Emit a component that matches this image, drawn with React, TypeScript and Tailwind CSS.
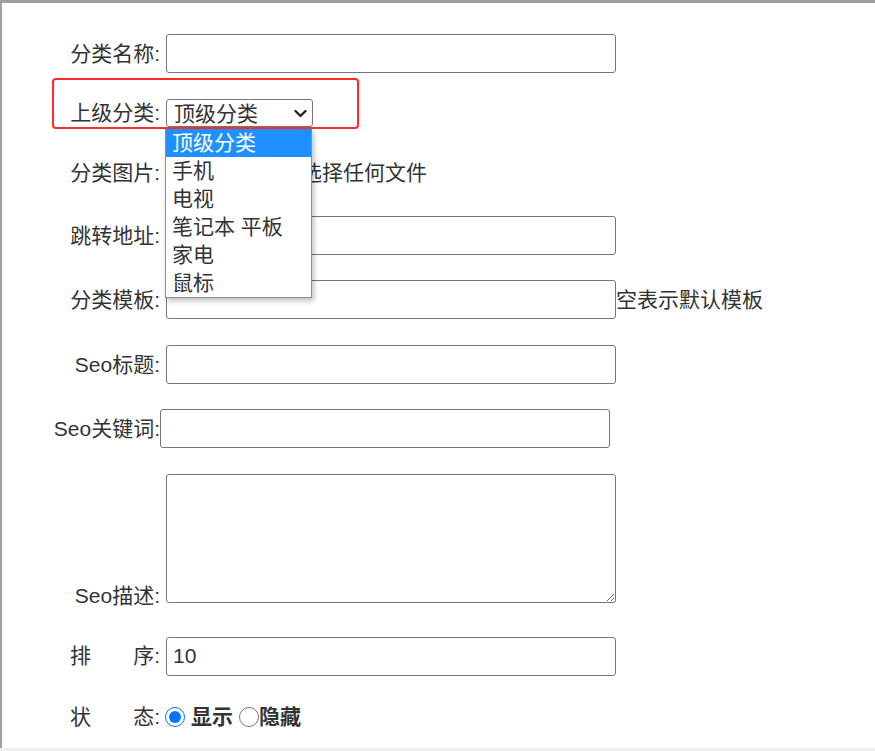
import React from "react";

const inputCls =
  "h-[39px] w-[450px] rounded-[3px] border border-[#767676] bg-white px-[6px] text-[21px] text-[#333] outline-none";

function Label({ children }: { children: React.ReactNode }) {
  return <div className="flex w-[158px] shrink-0 justify-end whitespace-nowrap">{children}</div>;
}

function SpacedLabel({ a, b }: { a: string; b: string }) {
  return (
    <div className="flex w-[158px] shrink-0 justify-end">
      <div className="flex w-[90px] justify-between whitespace-nowrap">
        <span>{a}</span>
        <span>{b}</span>
      </div>
    </div>
  );
}

const options = ["顶级分类", "手机", "电视", "笔记本 平板", "家电", "鼠标"];

export default function App() {
  return (
    <div className="min-h-[751px] bg-[#efefef] font-['Liberation_Sans','Noto_Sans_CJK_SC',sans-serif] text-[21px] leading-[28px] text-[#333]">
      <div className="relative h-[748px] border-l-2 border-t-[3px] border-[#a0a0a0] bg-white">
        <div className="flex flex-col">
          {/* 分类名称 */}
          <div className="mt-[31px] flex h-[39px] items-center">
            <Label>分类名称:</Label>
            <input className={`ml-[6px] ${inputCls}`} />
          </div>

          {/* 上级分类 */}
          <div className="mt-[26px] flex h-[28px] items-center">
            <Label>上级分类:</Label>
            <div className="relative z-10 ml-[6px]">
              <div className="flex h-[28px] w-[147px] items-center justify-between rounded-[3px] border border-[#767676] bg-white pl-[7px] pr-[5px]">
                <span className="pt-[1px] leading-[26px]">顶级分类</span>
                <svg width="13" height="9" viewBox="0 0 13 9" className="mt-[1px] text-[#222]">
                  <path d="M1.5 2 L6.5 7 L11.5 2" fill="none" stroke="currentColor" strokeWidth="2.3" strokeLinecap="round" strokeLinejoin="round" />
                </svg>
              </div>
              <div className="absolute left-[-1px] top-[29px] w-[147px] border border-[#8f8f8f] bg-white shadow-[2px_3px_5px_rgba(0,0,0,0.25)]">
                {options.map((o, i) => (
                  <div
                    key={o}
                    className={
                      i === 0
                        ? "h-[28px] whitespace-nowrap bg-[#1e90ff] pl-[6px] leading-[28px] text-white"
                        : "h-[28px] whitespace-nowrap pl-[6px] leading-[28px] text-[#333]"
                    }
                  >
                    {o}
                  </div>
                ))}
              </div>
            </div>
          </div>

          {/* 分类图片 */}
          <div className="mt-[32px] flex h-[28px] items-center">
            <Label>分类图片:</Label>
            <div className="ml-[6px] flex items-center">
              <button className="h-[26px] w-[102px] rounded-[3px] border border-[#767676] bg-[#efefef] text-[21px] leading-[24px]">
                选择文件
              </button>
              <span className="ml-[12px] whitespace-nowrap">未选择任何文件</span>
            </div>
          </div>

          {/* 跳转地址 */}
          <div className="mt-[29px] flex h-[39px] items-center">
            <Label>跳转地址:</Label>
            <input className={`ml-[6px] ${inputCls}`} />
          </div>

          {/* 分类模板 */}
          <div className="mt-[25px] flex h-[39px] items-center">
            <Label>分类模板:</Label>
            <input className={`ml-[6px] ${inputCls}`} />
            <span className="whitespace-nowrap">空表示默认模板</span>
          </div>

          {/* Seo标题 */}
          <div className="mt-[26px] flex h-[39px] items-center">
            <Label>Seo标题:</Label>
            <input className={`ml-[6px] ${inputCls}`} />
          </div>

          {/* Seo关键词 */}
          <div className="mt-[25px] flex h-[39px] items-center">
            <Label>Seo关键词:</Label>
            <input className={inputCls} />
          </div>

          {/* Seo描述 */}
          <div className="mt-[26px] flex items-end">
            <div className="mb-[-3px] flex w-[158px] shrink-0 justify-end leading-none">Seo描述:</div>
            <textarea className="ml-[6px] block h-[129px] w-[450px] rounded-[3px] border border-[#767676] bg-white px-[6px] text-[21px] outline-none" />
          </div>

          {/* 排序 */}
          <div className="mt-[34px] flex h-[38px] items-center">
            <SpacedLabel a="排" b="序:" />
            <input className={`ml-[6px] ${inputCls} h-[38px]`} defaultValue="10" />
          </div>

          {/* 状态 */}
          <div className="mt-[28px] flex h-[28px] items-center">
            <SpacedLabel a="状" b="态:" />
            <input type="radio" name="status" defaultChecked className="ml-[5px] mr-0 my-0 h-[20px] w-[20px]" />
            <span className="ml-[6px] font-bold">显示</span>
            <input type="radio" name="status" className="ml-[6px] mr-0 my-0 h-[20px] w-[20px]" />
            <span className="font-bold">隐藏</span>
          </div>
        </div>

        {/* red annotation box */}
        <div className="pointer-events-none absolute left-[50px] top-[75px] z-20 h-[51px] w-[307px] rounded-[4px] border-2 border-[#ff2a2a]" />
      </div>
    </div>
  );
}
